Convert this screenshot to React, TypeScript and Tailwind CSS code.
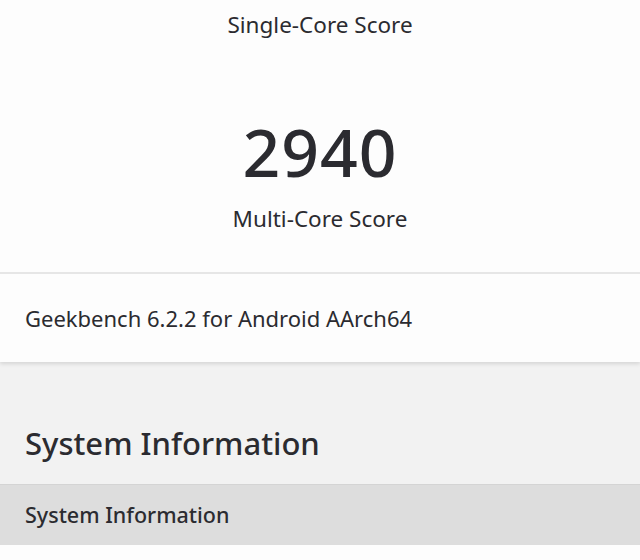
const App = () => {
  return (
    <div className="w-[640px] h-[560px] overflow-hidden bg-[#f2f2f2] text-[#2b2b30] font-['Noto_Sans',sans-serif]">
      {/* score card */}
      <div className="bg-[#fdfdfd] shadow-[0_2px_4px_rgba(0,0,0,0.12)]">
        <div className="h-[274px] flex flex-col items-center border-b-2 border-[#e6e6e6]">
          <div className="mt-[9px] text-[22.5px] leading-[32px]">Single-Core Score</div>
          <div className="mt-[72px] text-[66px] leading-[76px] font-medium tracking-[1px]">2940</div>
          <div className="mt-[14px] text-[22.5px] leading-[32px]">Multi-Core Score</div>
        </div>
        <div className="h-[88px] flex items-center px-[25px] text-[22px]">
          Geekbench 6.2.2 for Android AArch64
        </div>
      </div>

      {/* section */}
      <div className="h-[123px] flex items-end px-[25px] pb-[21px] border-b border-[#d4d4d4]">
        <h2 className="text-[31px] leading-[40px] font-medium">System Information</h2>
      </div>
      <div className="h-[60px] bg-[#dddddd] flex items-center px-[25px] text-[21.5px] font-medium">
        System Information
      </div>
      <div className="bg-[#fdfdfd] h-[40px]" />
    </div>
  );
};

export default App;
